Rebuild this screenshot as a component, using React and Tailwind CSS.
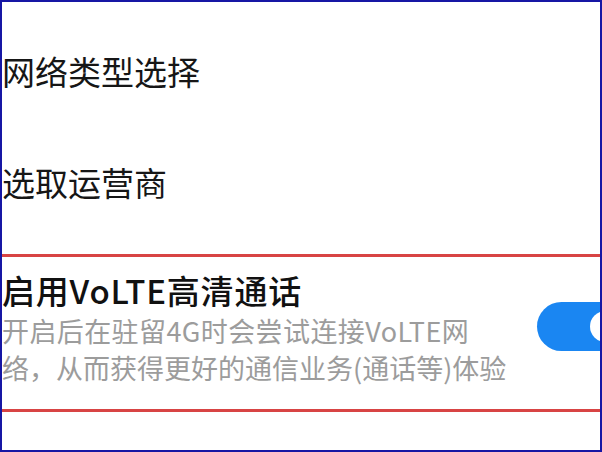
export default function App() {
  return (
    <div
      className="w-[602px] h-[452px] border-2 border-[#1616a4] bg-white overflow-hidden"
      style={{ fontFamily: '"Noto Sans CJK SC", "Noto Sans", sans-serif' }}
    >
      <div className="pt-[14px]">
        {/* plain rows */}
        <div className="h-[111px] flex items-center text-[33px] font-normal text-[#161616] leading-none">
          网络类型选择
        </div>
        <div className="h-[111px] flex items-center text-[33px] font-normal text-[#161616] leading-none">
          选取运营商
        </div>

        {/* highlighted VoLTE row */}
        <div className="mt-[16px] border-y-[3px] border-[#d84444] flex items-start pt-[13px] pb-[23px]">
          <div className="flex-1">
            <div className="text-[33px] font-medium tracking-[0.8px] text-[#111] leading-[40px]">启用VoLTE高清通话</div>
            <div className="mt-[2px] text-[27px] text-[#9c9c9c] leading-[37px]">
              <div className="tracking-[0.4px]">开启后在驻留4G时会尝试连接VoLTE网</div>
              <div>络，从而获得更好的通信业务(通话等)体验</div>
            </div>
          </div>
          <div className="shrink-0 mt-[32px] -mr-[30px] w-[93px] h-[49px] rounded-full bg-[#1a86f2] flex items-center justify-end pr-[9px]">
            <div className="w-[31px] h-[31px] rounded-full bg-white" />
          </div>
        </div>
      </div>
    </div>
  );
}
